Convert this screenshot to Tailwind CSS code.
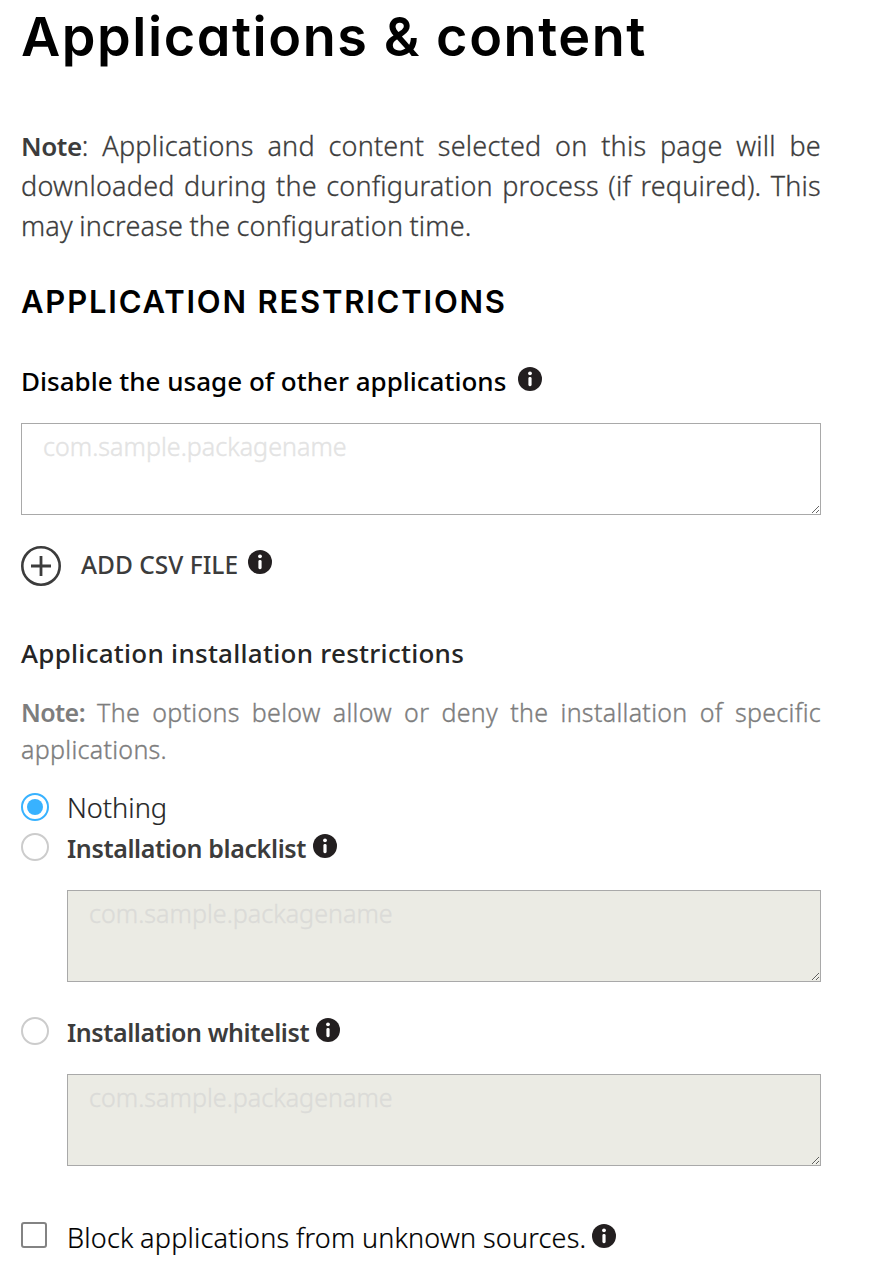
<!DOCTYPE html>
<html lang="en">
<head>
<meta charset="utf-8">
<title>Applications &amp; content</title>
<script src="https://cdn.jsdelivr.net/npm/@tailwindcss/browser@4"></script>
</head>
<body class="bg-white font-['Noto_Sans',sans-serif] text-[#3c3c3c]">
<svg class="hidden">
  <symbol id="info" viewBox="0 0 24 24">
    <circle cx="12" cy="12" r="12" fill="#231f20"/>
    <circle cx="12" cy="6.3" r="1.9" fill="#fff"/>
    <rect x="10.4" y="10" width="3.2" height="9.2" rx="1.4" fill="#fff"/>
  </symbol>
</svg>
<main class="ml-[21px] flex w-[800px] flex-col">
  <h1 class="h-[126px] pt-[6px] font-['Inter',sans-serif] text-[54px] leading-[62px] font-semibold tracking-[1.55px] whitespace-nowrap text-black [font-feature-settings:'cv11']">Applications &amp; content</h1>
  <p class="text-justify text-[27px] leading-[40px] font-light tracking-[0.22px] [word-spacing:-1px] [-webkit-text-stroke:0.3px_#3c3c3c]"><b class="text-[26px] leading-none font-semibold tracking-[-0.4px] [-webkit-text-stroke:0]">Note</b>: Applications and content selected on this page will be downloaded during the configuration process (if required). This may increase the configuration time.</p>
  <h2 class="mt-[36px] h-10 font-['Inter',sans-serif] text-[31px] leading-[40px] font-semibold tracking-[1.8px] whitespace-nowrap text-black">APPLICATION RESTRICTIONS</h2>
  <div class="mt-[40px] flex h-10 whitespace-nowrap text-black">
    <h3 class="text-[26px] leading-[38px] font-medium">Disable the usage of other applications</h3>
    <svg class="mt-[5px] ml-[11.5px] size-6"><use href="#info"/></svg>
  </div>
  <textarea class="mt-[21px] block h-[92px] w-[800px] resize border border-[#a9a9a9] px-[21px] py-[5px] text-[25px] leading-[35px] font-light tracking-[0.05px] placeholder:text-[#e3e3e3] [-webkit-text-stroke:0.4px_#e3e3e3]" placeholder="com.sample.packagename"></textarea>
  <div class="mt-[31px] flex h-10 whitespace-nowrap">
    <svg class="size-10" viewBox="0 0 40 40" fill="none" stroke="#3c3c3c"><circle cx="20" cy="20" r="18.7" stroke-width="2.6"/><path d="M10 20H30M20 10V30" stroke-width="2.8"/></svg>
    <span class="ml-[20px] text-[24.5px] leading-[38px] font-medium">ADD CSV FILE</span>
    <svg class="mt-[4px] ml-[10px] size-6"><use href="#info"/></svg>
  </div>
  <h3 class="mt-[48px] h-10 text-[26px] leading-[39px] font-medium tracking-[0.27px] whitespace-nowrap text-[#252525]">Application installation restrictions</h3>
  <p class="mt-[20px] text-justify text-[25px] leading-[37px] font-light tracking-[0.3px] text-[#7d7d7d] [-webkit-text-stroke:0.35px_#7d7d7d]"><b class="leading-none font-semibold tracking-[-0.6px] [-webkit-text-stroke:0]">Note:</b> The options below allow or deny the installation of specific applications.</p>
  <div class="mt-[24px] flex h-10 whitespace-nowrap">
    <span class="mt-[1px] flex size-7 items-center justify-center rounded-full border-2 border-[#38b2ff]"><span class="size-4 rounded-full bg-[#38b2ff]"></span></span>
    <span class="ml-[18px] text-[27.2px] leading-[32px] font-light text-[#252525] [-webkit-text-stroke:0.2px_#252525]">Nothing</span>
  </div>
  <div class="flex h-[58px] whitespace-nowrap">
    <span class="mt-[1px] size-7 rounded-full border-2 border-[#ccc]"></span>
    <span class="ml-[18px] text-[25px] leading-[33px] font-semibold tracking-[-0.38px]">Installation blacklist</span>
    <svg class="mt-[2px] ml-[6.6px] size-6"><use href="#info"/></svg>
  </div>
  <textarea class="ml-[46px] block h-[92px] w-[754px] resize border border-[#a9a9a9] bg-[#ebebe4] px-[21px] py-[5px] text-[25px] leading-[35px] font-light tracking-[0.05px] placeholder:text-[#dbdbd8] [-webkit-text-stroke:0.4px_#dbdbd8]" placeholder="com.sample.packagename" disabled></textarea>
  <div class="mt-[34px] flex h-[58px] whitespace-nowrap">
    <span class="mt-[1px] size-7 rounded-full border-2 border-[#ccc]"></span>
    <span class="ml-[18px] text-[25px] leading-[33px] font-semibold tracking-[-0.42px]">Installation whitelist</span>
    <svg class="mt-[2px] ml-[7px] size-6"><use href="#info"/></svg>
  </div>
  <textarea class="ml-[46px] block h-[92px] w-[754px] resize border border-[#a9a9a9] bg-[#ebebe4] px-[21px] py-[5px] text-[25px] leading-[35px] font-light tracking-[0.05px] placeholder:text-[#dbdbd8] [-webkit-text-stroke:0.4px_#dbdbd8]" placeholder="com.sample.packagename" disabled></textarea>
  <div class="mt-[52px] flex h-10 whitespace-nowrap text-black">
    <span class="mt-[4px] size-[26px] rounded-[3px] border-2 border-[#838383]"></span>
    <span class="ml-[20px] text-[27px] leading-[39px] font-light tracking-[0.2px] [word-spacing:-0.6px] [-webkit-text-stroke:0.2px_#000]">Block applications from unknown sources.</span>
    <svg class="mt-[6px] ml-[6px] size-6"><use href="#info"/></svg>
  </div>
</main>
</body>
</html>
